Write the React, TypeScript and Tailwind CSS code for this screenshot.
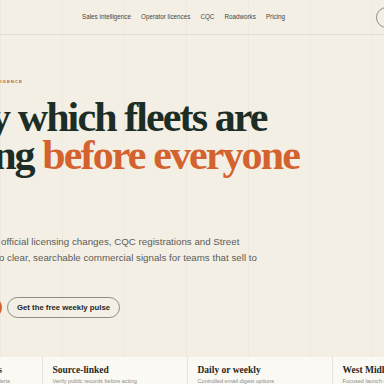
import React from "react";

const navLinks = ["Sales intelligence", "Operator licences", "CQC", "Roadworks", "Pricing"];

const features = [
  { title: "Official public registers", note: "Licence, registration and roadworks alerts" },
  { title: "Source-linked", note: "Verify public records before acting" },
  { title: "Daily or weekly", note: "Controlled email digest options" },
  { title: "West Midlands first", note: "Focused launch region" },
];

const App: React.FC = () => {
  return (
    <div className="w-[384px] h-[384px] overflow-hidden flex flex-col bg-[#f3efe4] bg-[linear-gradient(to_right,rgba(0,0,0,0.025)_1px,transparent_1px)] bg-[size:62px_100%] font-['Liberation_Sans',Arial,sans-serif]">
      <header className="h-[35px] shrink-0 flex items-center border-b border-[#e3ded1]">
        <nav className="ml-[82px] flex gap-[10px] text-[6.3px] text-[#45443f]">
          {navLinks.map((link) => (
            <a key={link} href="#">
              {link}
            </a>
          ))}
        </nav>
        <button className="ml-auto -mr-[52px] h-[21px] w-[60px] shrink-0 rounded-full border border-[#8d8b82] text-[7px] text-[#24241f]">
          Log in
        </button>
      </header>

      <main className="flex-1 flex flex-col">
        <section className="-ml-[136px] pt-[43px]">
          <div className="flex items-center gap-[4px] h-[8px]">
            <span className="w-[9px] h-px bg-[#c9653a]" />
            <p className="text-[4.4px] leading-[8px] font-bold tracking-[0.22em] text-[#b85c33] uppercase">
              UK commercial vehicle sales intelligence
            </p>
          </div>

          <h1 className="mt-[13px] font-['Liberation_Serif',serif] font-bold text-[42px] leading-[37.5px] tracking-[-0.045em] text-[#1b2d25] whitespace-nowrap">
            See early which fleets are
            <br />
            expanding <span className="text-[#d4622e]">before everyone</span>
          </h1>

          <p className="mt-[60px] text-[9.75px] leading-[16px] text-[#5d5c56] whitespace-nowrap">
            Fleet Pulse continuously tracks official licensing changes, CQC registrations and Street
            <br />
            works alerts and turns those into clear, searchable commercial signals for teams that sell to
            <br />
            fleets.
          </p>

          <div className="mt-[15px] flex items-center gap-[5px]">
            <button className="h-[21px] w-[138px] rounded-full bg-[#d4622e] text-white text-[7.75px] font-bold">
              Explore live signals
            </button>
            <button className="h-[21px] px-[9px] rounded-full border border-[#8d8b82] text-[7.75px] font-bold text-[#24241f]">
              Get the free weekly pulse
            </button>
          </div>
        </section>

        <section className="mt-auto -ml-[103px] grid grid-cols-[repeat(4,145px)] bg-[#fbf9f3]">
          {features.map((f, i) => (
            <div
              key={f.title}
              className={`h-[27px] px-[9.5px] pt-[7px] whitespace-nowrap ${i > 0 ? "border-l border-[#e8e3d8]" : ""}`}
            >
              <h3 className="font-['Liberation_Serif',serif] font-bold text-[9.5px] leading-[12px] text-[#1f2823]">
                {f.title}
              </h3>
              <p className="mt-[2px] text-[5.6px] leading-[7px] text-[#8c8b84]">{f.note}</p>
            </div>
          ))}
        </section>
      </main>
    </div>
  );
};

export default App;
